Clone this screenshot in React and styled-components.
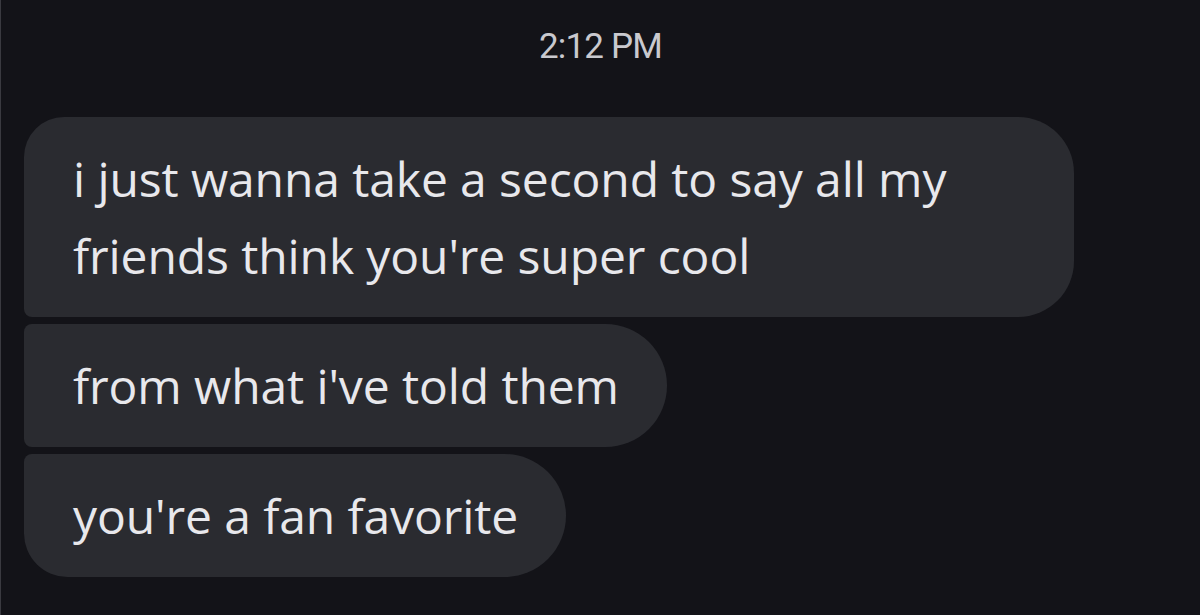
import React from "react";
import styled, { createGlobalStyle } from "styled-components";

const Global = createGlobalStyle`
  html, body { margin: 0; padding: 0; background: #131318; }
  body { width: 1200px; height: 615px; overflow: hidden; }
`;

const Screen = styled.div`
  width: 1200px;
  height: 615px;
  box-sizing: border-box;
  background: #131318;
  display: flex;
  flex-direction: column;
  padding: 0 23px;
  font-family: "Open Sans", Roboto, sans-serif;
  border-left: 1px solid #3a3a40;
`;

const Timestamp = styled.div`
  text-align: center;
  color: #c9c9ce;
  font-family: Roboto, "Liberation Sans", sans-serif;
  font-size: 35px;
  line-height: 40px;
  letter-spacing: -0.8px;
  padding-top: 27px;
  height: 117px;
  box-sizing: border-box;
`;

const Thread = styled.div`
  display: flex;
  flex-direction: column;
  align-items: flex-start;
  gap: 7px;
`;

const radii = {
  first: "40px 56px 56px 8px",
  middle: "8px 62px 62px 8px",
  last: "8px 62px 62px 44px",
};

const Bubble = styled.div`
  background: #2a2b30;
  color: #e8e8ec;
  font-size: 48px;
  line-height: 77px;
  padding: 23px 48px 23px 49px;
  max-width: 1050px;
  box-sizing: border-box;
  border-radius: ${(p) => radii[p.$pos]};
  letter-spacing: -0.1px;
`;

export default function App() {
  return (
    <>
      <Global />
      <Screen>
        <Timestamp>2:12 PM</Timestamp>
        <Thread>
          <Bubble $pos="first">
            i just wanna take a second to say all my friends think you're super cool
          </Bubble>
          <Bubble $pos="middle">from what i've told them</Bubble>
          <Bubble $pos="last">you're a fan favorite</Bubble>
        </Thread>
      </Screen>
    </>
  );
}
